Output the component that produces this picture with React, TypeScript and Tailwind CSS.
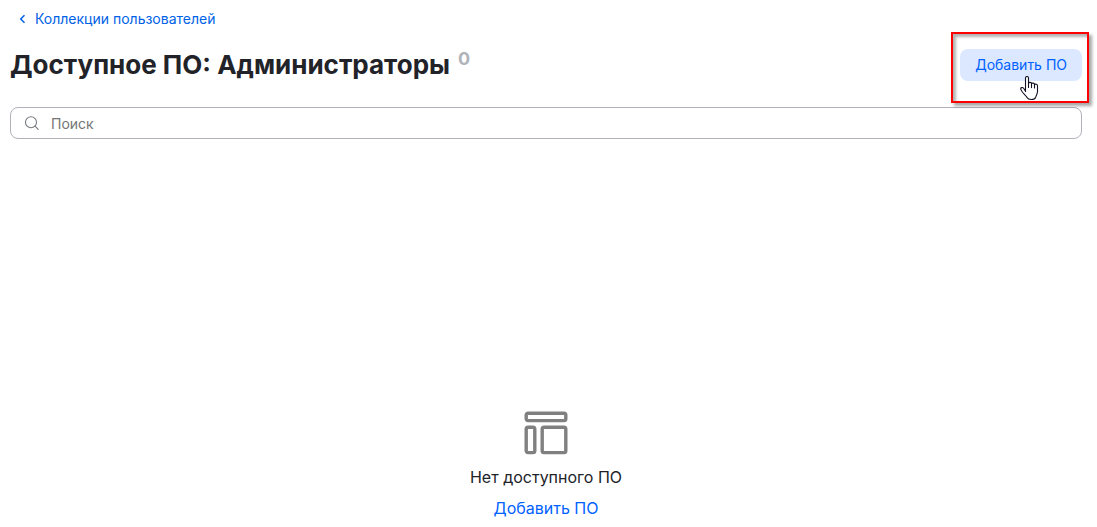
import React from 'react';

const collection = {
  parent: 'Коллекции пользователей',
  title: 'Доступное ПО: Администраторы',
  count: 0,
};

function HandCursor() {
  return (
    <svg
      className="absolute left-[60px] top-[27px] z-20 w-[19px] h-[25px] pointer-events-none"
      viewBox="0 0 19 25"
      fill="#ffffff"
      stroke="#111122"
      strokeWidth="1.1"
      strokeLinejoin="round"
      strokeLinecap="round"
      aria-hidden="true"
    >
      <path d="M5.5 15.5V2C5.5 0 8.5 0 8.5 2V7.2C9.2 5.9 11.5 6.1 11.5 7.6C12.4 6.7 14.5 7 14.5 8.5C15.6 7.8 17.5 8.2 17.5 9.8V15.5C17.5 18 16.2 19.3 15.7 21.2C14.5 24.2 8.3 24.2 7 21.4C5.6 19 2.4 17.2 .9 13.6C.2 11.5 2.5 10.8 3.8 12.5L5.5 15.2" />
      <path d="M8.5 7v4.5M11.5 7.6v4M14.5 8.5v3.5" />
    </svg>
  );
}

export default function AvailableSoftware() {
  return (
    <main className="min-h-screen bg-white text-[#212329] font-['Inter',sans-serif] pl-[10px] pr-[15px] pt-[9px]">
      {/* Back link */}
      <nav className="flex pl-2">
        <a href="#collections" className="flex items-center text-sm text-[#0062e6]">
          <svg className="w-[9px] h-[10px] mr-2" viewBox="0 0 9 10" fill="none" stroke="currentColor" strokeWidth="1.5" aria-hidden="true">
            <path d="M6.5 1.2L2.7 5l3.8 3.8" />
          </svg>
          {collection.parent}
        </a>
      </nav>

      {/* Page header */}
      <header className="flex items-center justify-between mt-[18px]">
        <div className="flex items-start gap-2">
          <h1 className="text-[26px] leading-9 font-bold">{collection.title}</h1>
          <span className="text-lg leading-6 font-bold text-[#b0b3ba]">{collection.count}</span>
        </div>

        <div className="relative">
          <button type="button" className="block h-8 px-[15px] rounded-lg bg-[#dce8ff] text-sm text-[#0062ff]">
            Добавить ПО
          </button>
          {/* Highlight frame around the action */}
          <div className="absolute -left-[9px] -right-[7px] -top-[17px] -bottom-[22px] z-10 border-2 border-[#ff0000] shadow-[3px_3px_3px_rgba(0,0,0,0.35),inset_3px_3px_3px_rgba(0,0,0,0.3)] pointer-events-none" />
          <HandCursor />
        </div>
      </header>

      {/* Search */}
      <div className="relative mt-6">
        <svg className="absolute left-[14px] top-2 w-4 h-4" viewBox="0 0 16 16" fill="none" stroke="#777a80" strokeWidth="1.1" strokeLinecap="round" aria-hidden="true">
          <circle cx="7" cy="7.2" r="5.5" />
          <path d="M11 11.2l3.2 3.1" />
        </svg>
        <input
          type="text"
          aria-label="Поиск"
          placeholder="Поиск"
          className="block w-full h-8 pl-10 pr-3 rounded-lg border border-[#b0b1b9] text-sm placeholder:text-[#757575] focus:outline-none focus:border-blue-500"
        />
      </div>

      {/* Empty state */}
      <section className="flex flex-col items-center pt-[272px]">
        <svg className="w-11 h-11" viewBox="0 0 44 44" fill="none" stroke="#808080" strokeWidth="3.4" aria-hidden="true">
          <rect x="2.2" y="2.2" width="39.6" height="7.4" rx="1.8" />
          <rect x="2.2" y="16.2" width="8.6" height="25.4" rx="1.8" />
          <rect x="18.2" y="16.2" width="23.6" height="25.4" rx="1.8" />
        </svg>
        <p className="mt-[10px] text-base">Нет доступного ПО</p>
        <button type="button" className="mt-[7px] text-base text-[#0062ff]">
          Добавить ПО
        </button>
      </section>
    </main>
  );
}
